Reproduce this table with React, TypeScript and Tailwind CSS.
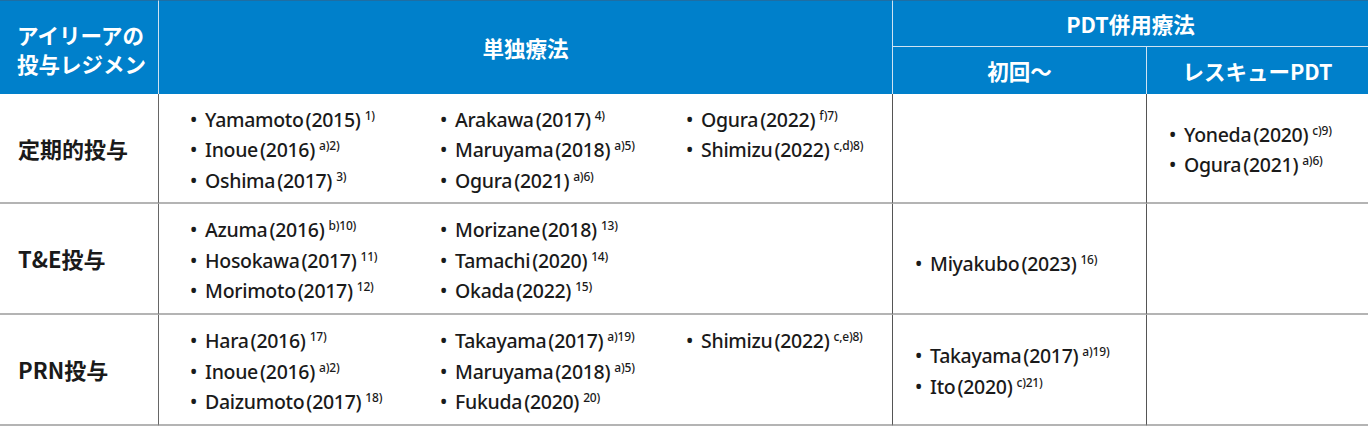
import React from "react";

type Ref = { name: string; year: string; sup: string };

const Sup = ({ children }: { children: React.ReactNode }) => (
  <span className="relative -top-[7px] ml-[4px] text-[12px] leading-none tracking-[-0.2px]">{children}</span>
);

const Item = ({ r }: { r: Ref }) => (
  <div className="whitespace-nowrap">
    <span className="mr-[8px]">•</span>
    {r.name}
    <span className="ml-[2px]">({r.year})</span>
    <Sup>{r.sup}</Sup>
  </div>
);

const Col = ({ items, w }: { items: Ref[]; w?: string }) => (
  <div className={`flex flex-col ${w ?? ""}`}>
    {items.map((r, i) => (
      <Item key={i} r={r} />
    ))}
  </div>
);

const r = (name: string, year: string, sup: string): Ref => ({ name, year, sup });

const JP = { fontFamily: '"Noto Sans CJK JP", sans-serif' };

export default function App() {
  const hdr = "bg-[#0080cb] text-white font-bold text-[21.5px] leading-[29px]";
  const body = "text-[#1a1a1a] text-[19.5px] tracking-[-0.3px] font-medium leading-[30.5px]";
  const lbl = "border-r border-[#666] border-b-2 border-b-[#b4b4b4] flex items-center pl-[18px] font-bold text-[22px] text-[#1a1a1a]";
  const hb = "border-b-2 border-b-[#b4b4b4]";
  return (
    <div
      className="w-[1368px] h-[426px] bg-white grid grid-cols-[159px_734px_254px_221px] grid-rows-[47px_47px_110px_111px_111px]"
      style={{ fontFamily: '"Noto Sans", "Noto Sans CJK JP", sans-serif' }}
    >
      {/* header */}
      <div className={`${hdr} row-span-2 border-r border-[#cfe3f2] border-t border-t-[#1f6ea3] flex items-center pl-[17px] pt-[2px]`} style={JP}>
        <div>
          アイリーアの
          <br />
          投与レジメン
        </div>
      </div>
      <div className={`${hdr} row-span-2 border-r border-[#cfe3f2] border-t border-t-[#1f6ea3] flex items-center justify-center`} style={JP}>
        単独療法
      </div>
      <div className={`${hdr} col-span-2 border-b border-[#cfe3f2] border-t border-t-[#1f6ea3] flex items-center justify-center`} style={JP}>
        PDT併用療法
      </div>
      <div className={`${hdr} border-r border-[#cfe3f2] flex items-center justify-center`} style={JP}>
        初回～
      </div>
      <div className={`${hdr} flex items-center justify-center`} style={JP}>
        レスキューPDT
      </div>

      {/* row 1 */}
      <div className={lbl} style={JP}>
        定期的投与
      </div>
      <div className={`${body} border-r border-[#555] ${hb} flex items-center pl-[31px] pt-[5px]`}>
        <div className="flex">
          <Col w="w-[250px]" items={[r("Yamamoto", "2015", "1)"), r("Inoue", "2016", "a)2)"), r("Oshima", "2017", "3)")]} />
          <Col w="w-[246px]" items={[r("Arakawa", "2017", "4)"), r("Maruyama", "2018", "a)5)"), r("Ogura", "2021", "a)6)")]} />
          <Col items={[r("Ogura", "2022", "f)7)"), r("Shimizu", "2022", "c,d)8)")]} />
        </div>
      </div>
      <div className={`border-r border-[#555] ${hb}`} />
      <div className={`${body} ${hb} flex items-center pl-[22px] pt-[4px]`}>
        <Col items={[r("Yoneda", "2020", "c)9)"), r("Ogura", "2021", "a)6)")]} />
      </div>

      {/* row 2 */}
      <div className={lbl} style={JP}>
        T&amp;E投与
      </div>
      <div className={`${body} border-r border-[#555] ${hb} flex items-center pl-[31px] pt-[5px]`}>
        <div className="flex">
          <Col w="w-[250px]" items={[r("Azuma", "2016", "b)10)"), r("Hosokawa", "2017", "11)"), r("Morimoto", "2017", "12)")]} />
          <Col w="w-[246px]" items={[r("Morizane", "2018", "13)"), r("Tamachi", "2020", "14)"), r("Okada", "2022", "15)")]} />
        </div>
      </div>
      <div className={`${body} border-r border-[#555] ${hb} flex items-center pl-[22px] pt-[12px]`}>
        <Col items={[r("Miyakubo", "2023", "16)")]} />
      </div>
      <div className={hb} />

      {/* row 3 */}
      <div className={lbl} style={JP}>
        PRN投与
      </div>
      <div className={`${body} border-r border-[#555] ${hb} flex items-center pl-[31px] pt-[5px]`}>
        <div className="flex">
          <Col w="w-[250px]" items={[r("Hara", "2016", "17)"), r("Inoue", "2016", "a)2)"), r("Daizumoto", "2017", "18)")]} />
          <Col w="w-[246px]" items={[r("Takayama", "2017", "a)19)"), r("Maruyama", "2018", "a)5)"), r("Fukuda", "2020", "20)")]} />
          <Col items={[r("Shimizu", "2022", "c,e)8)")]} />
        </div>
      </div>
      <div className={`${body} border-r border-[#555] ${hb} flex items-center pl-[22px] pt-[4px]`}>
        <Col items={[r("Takayama", "2017", "a)19)"), r("Ito", "2020", "c)21)")]} />
      </div>
      <div className={hb} />
    </div>
  );
}
